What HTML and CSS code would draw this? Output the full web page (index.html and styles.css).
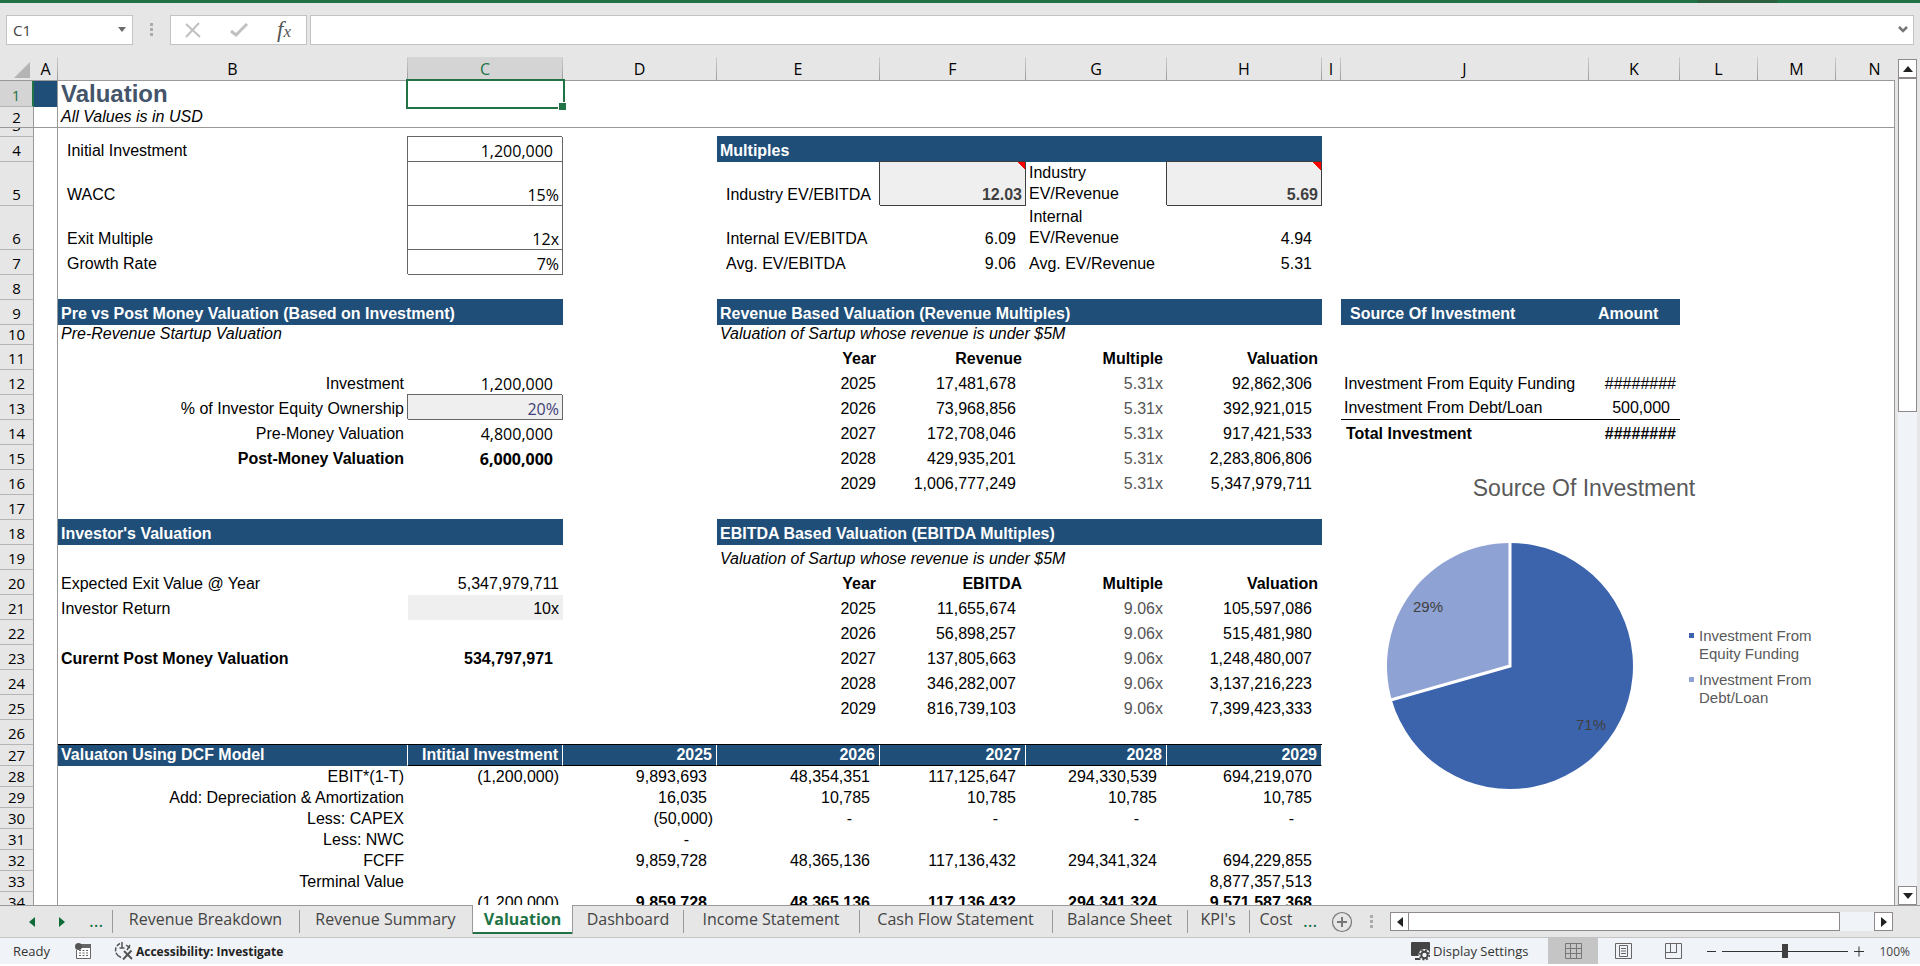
FILE: index.html
```html
<!DOCTYPE html>
<html lang="en">
<head>
<meta charset="utf-8">
<title>Valuation</title>
<link rel="stylesheet" href="styles.css">
</head>
<body>
<div class="app">
  <div class="titlebar"><span class="titlebar-mark"></span></div>

  <div class="formula-row">
    <div class="name-box">
      <input type="text" value="C1" aria-label="Name Box">
      <button type="button" aria-label="Open name list"><svg width="8" height="5" viewBox="0 0 8 5"><path d="M0 0h8L4 5z" fill="#6a6a6a"/></svg></button>
    </div>
    <svg class="grip" width="3" height="14" viewBox="0 0 3 14" fill="#ababab"><path d="M0 0h3v3H0zM0 5h3v3H0zM0 10h3v3H0z"/></svg>
    <div class="formula-tools">
      <button type="button" aria-label="Cancel"><svg width="16" height="16" viewBox="0 0 16 16" fill="none" stroke="#c0c0c0" stroke-width="2"><path d="M1 2l14 13M14 1L1 15"/></svg></button>
      <button type="button" aria-label="Enter"><svg width="18" height="16" viewBox="0 0 18 16" fill="none" stroke="#c0c0c0" stroke-width="3"><path d="M1 9l5 4L17 2"/></svg></button>
      <button type="button" class="fx" aria-label="Insert Function"><i>f</i><i class="fx-x">x</i></button>
    </div>
    <div class="formula-box">
      <input type="text" value="" aria-label="Formula Bar">
      <button type="button" aria-label="Expand Formula Bar"><svg width="10" height="7" viewBox="0 0 10 7" fill="none" stroke="#777" stroke-width="2.5"><path d="M1 1l4 4 4-4"/></svg></button>
    </div>
  </div>

  <div class="work">
    <div class="sheet">
      <table class="grid">
        <colgroup>
          <col class="c-num"><col class="c-a"><col class="c-b"><col class="c-c"><col class="c-d"><col class="c-e"><col class="c-f"><col class="c-g"><col class="c-h"><col class="c-i"><col class="c-j"><col class="c-k"><col class="c-l"><col class="c-m"><col>
        </colgroup>
        <thead>
          <tr><th class="corner"><svg width="16" height="16" viewBox="0 0 16 16"><path d="M16 0v16H0z" fill="#b4b4b4"/></svg></th><th>A</th><th>B</th><th class="on">C</th><th>D</th><th>E</th><th>F</th><th>G</th><th>H</th><th>I</th><th>J</th><th>K</th><th>L</th><th>M</th><th class="cut">N</th></tr>
        </thead>
        <tbody>
          <tr class="r26"><th class="on">1</th><td class="a navy"></td><td class="title">Valuation</td><td class="selected"><span class="cursor"></span></td></tr>
          <tr class="r21 frozen"><th>2</th><td class="a"></td><td class="it">All Values is in USD</td><td colspan="12"></td></tr>
          <tr class="r9"><th><div class="clip">3</div></th><td class="a"></td></tr>
          <tr class="r25"><th>4</th><td class="a"></td><td class="in">Initial Investment</td><td class="box acc alt">1,200,000</td><td></td><td class="head" colspan="4">Multiples</td></tr>
          <tr class="r44"><th>5</th><td class="a"></td><td class="in">WACC</td><td class="box r alt">15%</td><td></td><td class="in">Industry EV/EBITDA</td><td class="box dark note r b">12.03</td><td class="wrap">Industry EV/Revenue</td><td class="box dark note r b">5.69</td></tr>
          <tr class="r44"><th>6</th><td class="a"></td><td class="in">Exit Multiple</td><td class="box r alt">12x</td><td></td><td class="in">Internal EV/EBITDA</td><td class="acc">6.09</td><td class="wrap">Internal EV/Revenue</td><td class="acc">4.94</td></tr>
          <tr class="r25"><th>7</th><td class="a"></td><td class="in">Growth Rate</td><td class="box r alt">7%</td><td></td><td class="in">Avg. EV/EBITDA</td><td class="acc">9.06</td><td>Avg. EV/Revenue</td><td class="acc">5.31</td></tr>
          <tr class="r25"><th>8</th><td class="a"></td></tr>
          <tr class="r25"><th>9</th><td class="a"></td><td class="head" colspan="2">Pre vs Post Money Valuation (Based on Investment)</td><td></td><td class="head" colspan="4">Revenue Based Valuation (Revenue Multiples)</td><td></td><td class="head in">Source Of Investment</td><td class="head in">Amount</td></tr>
          <tr class="r20"><th>10</th><td class="a"></td><td class="it">Pre-Revenue Startup Valuation</td><td></td><td></td><td class="it" colspan="4">Valuation of Sartup whose revenue is under $5M</td></tr>
          <tr class="r25"><th>11</th><td class="a"></td><td></td><td></td><td></td><td class="r b">Year</td><td class="r b">Revenue</td><td class="r b">Multiple</td><td class="r b">Valuation</td></tr>
          <tr class="r25"><th>12</th><td class="a"></td><td class="r">Investment</td><td class="acc alt">1,200,000</td><td></td><td class="r">2025</td><td class="acc">17,481,678</td><td class="r grey">5.31x</td><td class="acc">92,862,306</td><td></td><td>Investment From Equity Funding</td><td class="r">########</td></tr>
          <tr class="r25"><th>13</th><td class="a"></td><td class="r">% of Investor Equity Ownership</td><td class="box fill r plum alt">20%</td><td></td><td class="r">2026</td><td class="acc">73,968,856</td><td class="r grey">5.31x</td><td class="acc">392,921,015</td><td></td><td class="under">Investment From Debt/Loan</td><td class="acc under">500,000</td></tr>
          <tr class="r25"><th>14</th><td class="a"></td><td class="r">Pre-Money Valuation</td><td class="acc alt">4,800,000</td><td></td><td class="r">2027</td><td class="acc">172,708,046</td><td class="r grey">5.31x</td><td class="acc">917,421,533</td><td></td><td class="b total">Total Investment</td><td class="r b">########</td></tr>
          <tr class="r25"><th>15</th><td class="a"></td><td class="r b">Post-Money Valuation</td><td class="acc b alt">6,000,000</td><td></td><td class="r">2028</td><td class="acc">429,935,201</td><td class="r grey">5.31x</td><td class="acc">2,283,806,806</td></tr>
          <tr class="r25"><th>16</th><td class="a"></td><td></td><td></td><td></td><td class="r">2029</td><td class="acc">1,006,777,249</td><td class="r grey">5.31x</td><td class="acc">5,347,979,711</td></tr>
          <tr class="r25"><th>17</th><td class="a"></td></tr>
          <tr class="r25"><th>18</th><td class="a"></td><td class="head" colspan="2">Investor's Valuation</td><td></td><td class="head" colspan="4">EBITDA Based Valuation (EBITDA Multiples)</td></tr>
          <tr class="r25"><th>19</th><td class="a"></td><td></td><td></td><td></td><td class="it" colspan="4">Valuation of Sartup whose revenue is under $5M</td></tr>
          <tr class="r25"><th>20</th><td class="a"></td><td>Expected Exit Value @ Year</td><td class="r">5,347,979,711</td><td></td><td class="r b">Year</td><td class="r b">EBITDA</td><td class="r b">Multiple</td><td class="r b">Valuation</td></tr>
          <tr class="r25"><th>21</th><td class="a"></td><td>Investor Return</td><td class="fill r">10x</td><td></td><td class="r">2025</td><td class="acc">11,655,674</td><td class="r grey">9.06x</td><td class="acc">105,597,086</td></tr>
          <tr class="r25"><th>22</th><td class="a"></td><td></td><td></td><td></td><td class="r">2026</td><td class="acc">56,898,257</td><td class="r grey">9.06x</td><td class="acc">515,481,980</td></tr>
          <tr class="r25"><th>23</th><td class="a"></td><td class="b">Curernt Post Money Valuation</td><td class="acc b">534,797,971</td><td></td><td class="r">2027</td><td class="acc">137,805,663</td><td class="r grey">9.06x</td><td class="acc">1,248,480,007</td></tr>
          <tr class="r25"><th>24</th><td class="a"></td><td></td><td></td><td></td><td class="r">2028</td><td class="acc">346,282,007</td><td class="r grey">9.06x</td><td class="acc">3,137,216,223</td></tr>
          <tr class="r25"><th>25</th><td class="a"></td><td></td><td></td><td></td><td class="r">2029</td><td class="acc">816,739,103</td><td class="r grey">9.06x</td><td class="acc">7,399,423,333</td></tr>
          <tr class="r25"><th>26</th><td class="a"></td></tr>
          <tr class="r21 years"><th>27</th><td class="a"></td><td class="head">Valuaton Using DCF Model</td><td class="head r">Intitial Investment</td><td class="head r">2025</td><td class="head r">2026</td><td class="head r">2027</td><td class="head r">2028</td><td class="head r">2029</td></tr>
          <tr class="r21"><th>28</th><td class="a"></td><td class="r">EBIT*(1-T)</td><td class="r">(1,200,000)</td><td class="acc">9,893,693</td><td class="acc">48,354,351</td><td class="acc">117,125,647</td><td class="acc">294,330,539</td><td class="acc">694,219,070</td></tr>
          <tr class="r21"><th>29</th><td class="a"></td><td class="r">Add: Depreciation &amp; Amortization</td><td></td><td class="acc">16,035</td><td class="acc">10,785</td><td class="acc">10,785</td><td class="acc">10,785</td><td class="acc">10,785</td></tr>
          <tr class="r21"><th>30</th><td class="a"></td><td class="r">Less: CAPEX</td><td></td><td class="r">(50,000)</td><td class="dash">-</td><td class="dash">-</td><td class="dash">-</td><td class="dash">-</td></tr>
          <tr class="r21"><th>31</th><td class="a"></td><td class="r">Less: NWC</td><td></td><td class="dash">-</td></tr>
          <tr class="r21"><th>32</th><td class="a"></td><td class="r">FCFF</td><td></td><td class="acc">9,859,728</td><td class="acc">48,365,136</td><td class="acc">117,136,432</td><td class="acc">294,341,324</td><td class="acc">694,229,855</td></tr>
          <tr class="r21"><th>33</th><td class="a"></td><td class="r">Terminal Value</td><td></td><td></td><td></td><td></td><td></td><td class="acc">8,877,357,513</td></tr>
          <tr class="r21"><th>34</th><td class="a"></td><td></td><td class="r">(1,200,000)</td><td class="acc b">9,859,728</td><td class="acc b">48,365,136</td><td class="acc b">117,136,432</td><td class="acc b">294,341,324</td><td class="acc b">9,571,587,368</td></tr>
        </tbody>
      </table>

      <figure class="chart">
        <figcaption>Source Of Investment</figcaption>
        <div class="chart-body">
          <svg class="pie" width="248" height="248" viewBox="-124 -124 248 248" role="img" aria-label="Equity funding 71%, debt or loan 29%">
            <path d="M0 0V-123A123 123 0 1 1 -118.3 33.7Z" fill="#3b64ad"/>
            <path d="M0 0L-118.3 33.7A123 123 0 0 1 0 -123Z" fill="#8fa2d4"/>
            <path d="M0 -124V0L-119.3 34" fill="none" stroke="#fff" stroke-width="3"/>
            <text x="-82" y="-54">29%</text>
            <text x="81" y="64">71%</text>
          </svg>
          <ul class="legend">
            <li>Investment From Equity Funding</li>
            <li class="light">Investment From Debt/Loan</li>
          </ul>
        </div>
      </figure>
    </div>

    <div class="vscroll">
      <button type="button" aria-label="Scroll up"><svg width="10" height="6" viewBox="0 0 10 6"><path d="M5 0l5 6H0z" fill="#222"/></svg></button>
      <div class="thumb"></div>
      <div class="track"></div>
      <button type="button" aria-label="Scroll down"><svg width="10" height="6" viewBox="0 0 10 6"><path d="M0 0h10L5 6z" fill="#222"/></svg></button>
    </div>
  </div>

  <div class="tabbar">
    <div class="tab-nav">
      <button type="button" aria-label="Previous sheet"><svg width="6" height="10" viewBox="0 0 6 10"><path d="M6 0v10L0 5z" fill="#0e6b38"/></svg></button>
      <button type="button" aria-label="Next sheet"><svg width="6" height="10" viewBox="0 0 6 10"><path d="M0 0v10l6-5z" fill="#0e6b38"/></svg></button>
      <button type="button" class="more">...</button>
    </div>
    <nav class="tabs" aria-label="Sheets">
      <button type="button" class="w-break">Revenue Breakdown</button>
      <button type="button" class="w-sum">Revenue Summary</button>
      <button type="button" class="w-val active">Valuation</button>
      <button type="button" class="w-dash">Dashboard</button>
      <button type="button" class="w-inc">Income Statement</button>
      <button type="button" class="w-cash">Cash Flow Statement</button>
      <button type="button" class="w-bal">Balance Sheet</button>
      <button type="button" class="w-kpi">KPI's</button>
      <button type="button" class="w-cost">Cost</button>
    </nav>
    <button type="button" class="more">...</button>
    <button type="button" class="add" aria-label="New sheet"><svg width="22" height="22" viewBox="0 0 22 22" fill="none" stroke="#777"><circle cx="11" cy="11" r="9.5" stroke-width="1.2"/><path d="M11 6v10M6 11h10" stroke-width="2"/></svg></button>
    <svg class="grip" width="3" height="14" viewBox="0 0 3 14" fill="#ababab"><path d="M0 0h3v3H0zM0 5h3v3H0zM0 10h3v3H0z"/></svg>
    <div class="hscroll">
      <button type="button" aria-label="Scroll left"><svg width="6" height="10" viewBox="0 0 6 10"><path d="M6 0v10L0 5z" fill="#222"/></svg></button>
      <div class="thumb"></div>
      <div class="track"></div>
      <button type="button" aria-label="Scroll right"><svg width="6" height="10" viewBox="0 0 6 10"><path d="M0 0v10l6-5z" fill="#222"/></svg></button>
    </div>
  </div>

  <footer class="status">
    <span class="ready">Ready</span>
    <button type="button" class="macro" aria-label="Record macro"><svg width="16" height="16" viewBox="0 0 16 16"><path d="M4.500 1.500H15.500V15.500H1.500V7" fill="#fff" stroke="#666"/><path d="M5 1h11v4H5z" fill="#666"/><circle cx="3.500" cy="3.500" r="3.500" fill="#555"/><path d="M4 7.500h10M4 10h10M4 12.500h10" stroke="#666" stroke-dasharray="2 1.500"/></svg></button>
    <button type="button" class="access"><svg width="19" height="18" viewBox="0 0 19 18" fill="none" stroke="#555" stroke-width="1.500"><path d="M6 1.500A7.500 7.500 0 0 0 2 11" stroke-dasharray="4 1.500"/><path d="M2 11c1 2 2.500 3.500 5 4.500"/><path d="M8 0v6M5.500 6h5M12 3l4 3M16 3l-3 5"/><path d="M10 9l8 8M17.500 8.500L9 17.500" stroke-width="2"/></svg>Accessibility: Investigate</button>
    <span class="spacer"></span>
    <button type="button" class="display"><svg width="20" height="19" viewBox="0 0 20 19"><path d="M1 0h17a1 1 0 0 1 1 1v13H1a1 1 0 0 1-1-1V1a1 1 0 0 1 1-1z" fill="#444"/><path d="M4 17h6" stroke="#444" stroke-width="2"/><circle cx="13.500" cy="13" r="6" fill="#f0f3f8"/><circle cx="13.500" cy="13" r="3.200" fill="none" stroke="#444" stroke-width="2"/><circle cx="13.500" cy="13" r="4.800" fill="none" stroke="#444" stroke-width="1.600" stroke-dasharray="1.900 1.870"/></svg>Display Settings</button>
    <div class="views">
      <button type="button" class="view on" aria-label="Normal"><svg width="17" height="16" viewBox="0 0 17 16" fill="none" stroke="#777"><path d="M.5 .5h16v15H.5zM.5 5.500h16M.5 10.500h16M5.500 .5v15M11.500 .5v15"/></svg></button>
      <button type="button" class="view" aria-label="Page Layout"><svg width="17" height="16" viewBox="0 0 17 16" fill="none" stroke="#666"><path d="M.5 .5h16v15H.5zM4.500 2.500h8v11h-8zM6 5.500h5M6 8h5M6 10.500h5"/></svg></button>
      <button type="button" class="view" aria-label="Page Break Preview"><svg width="17" height="16" viewBox="0 0 17 16" fill="none" stroke="#666"><path d="M.5 .5h16v15H.5zM5.500 .5v9M11.500 .5v9.500M.5 9.500h11"/></svg></button>
    </div>
    <div class="zoom">
      <button type="button" aria-label="Zoom out"><svg width="9" height="11" viewBox="0 0 9 11"><path d="M0 5.500h9" stroke="#333"/></svg></button>
      <input type="range" min="0" max="100" value="50" aria-label="Zoom">
      <button type="button" aria-label="Zoom in"><svg width="10" height="11" viewBox="0 0 10 11"><path d="M0 5.500h10M5 .5v10" stroke="#333"/></svg></button>
    </div>
    <button type="button" class="percent">100%</button>
  </footer>
</div>
</body>
</html>
```
FILE: styles.css
```css
* { box-sizing: border-box; }

:root {
  --chrome: #e6e6e6;
  --line: #999;
  --navy: #1f4e79;
  --green: #217346;
  --pale: #f0f3f8;
  --ui: "Open Sans", "Noto Sans", sans-serif;
}

body {
  margin: 0;
  background: #fff;
  font-family: "Liberation Sans", Arial, sans-serif;
  font-size: 16px;
  color: #000;
}

button {
  display: flex;
  align-items: center;
  justify-content: center;
  margin: 0;
  padding: 0;
  border: 0;
  background: none;
  color: inherit;
  font: inherit;
}

svg { display: block; flex: none; }

.app {
  display: flex;
  flex-direction: column;
  height: 100vh;
  padding-bottom: 2px;
  overflow: hidden;
}

/* Title strip and formula bar */
.titlebar { flex: none; height: 3px; padding-right: 143px; background: var(--green); }
.titlebar-mark { display: block; width: 80px; height: 3px; margin-left: auto; background: #2a6040; }

.formula-row {
  display: flex;
  flex: none;
  align-items: center;
  height: 54px;
  padding: 0 6px 1px;
  background: var(--chrome);
  font-family: var(--ui);
}
.name-box, .formula-tools, .formula-box {
  display: flex;
  align-items: center;
  height: 30px;
  border: 1px solid #c3c3c3;
  background: #fff;
}
.name-box { width: 127px; }
.name-box button { width: 20px; height: 100%; }
.formula-row input {
  flex: 1;
  min-width: 0;
  height: 100%;
  padding: 0 6px;
  border: 0;
  outline: 0;
  background: none;
  font: 15px var(--ui);
  color: #444;
}
.grip { margin: 0 17px; }
.formula-tools { justify-content: space-between; width: 137px; padding: 0 15px 0 14px; }
.fx { font: 23px "Liberation Serif", serif; color: #555; }
.fx i { line-height: 24px; }
.fx-x { padding-top: 5px; font-size: 17px; }
.formula-box { flex: 1; margin-left: 3px; }
.formula-box button { width: 20px; height: 100%; }

/* Sheet */
.work { display: flex; flex: 1; min-height: 0; background: var(--chrome); }
.sheet {
  position: relative;
  flex: 1;
  min-width: 0;
  overflow: hidden;
  background: #fff;
}
.sheet::after {
  content: "";
  position: absolute;
  inset: 23px 0 0 auto;
  border-right: 1px solid var(--line);
}
.grid {
  width: 100%;
  table-layout: fixed;
  border-collapse: separate;
  border-spacing: 0;
}
.c-num { width: 34px; }
.c-a { width: 24px; }
.c-b { width: 350px; }
.c-c { width: 155px; }
.c-d { width: 154px; }
.c-e { width: 163px; }
.c-f { width: 146px; }
.c-g { width: 141px; }
.c-h { width: 155px; }
.c-i { width: 19px; }
.c-j { width: 248px; }
.c-k { width: 91px; }
.c-l { width: 78px; }
.c-m { width: 78px; }

.grid th {
  padding: 0;
  background: var(--chrome);
  font: 15px/18px var(--ui);
  vertical-align: bottom;
}
.grid thead th {
  height: 24px;
  padding-bottom: 2px;
  border-bottom: 1px solid var(--line);
  border-right: 1px solid;
  border-image: linear-gradient(#d0d0d0, #999) 1;
  border-left: 0;
  border-top: 0;
  font-size: 16px;
}
.grid thead .corner { border-image: none; border-right: 0; }
.corner svg { margin-left: 14px; }
.grid thead .cut { padding-left: 18px; border-right: 0; border-image: none; }
.grid tbody th {
  padding-bottom: 2px;
  border-right: 1px solid var(--line);
  border-bottom: 1px solid #b5b5b5;
}
.grid thead .on { background: #d4d4d4; color: var(--green); }
.grid tbody .on { border-right: 2px solid var(--green); background: #d4d4d4; color: var(--green); }
.clip { display: flex; align-items: flex-end; justify-content: center; height: 6px; overflow: hidden; }

.grid td {
  padding: 0 2px 2px 3px;
  line-height: 18px;
  vertical-align: bottom;
  white-space: nowrap;
}
.r9 { height: 9px; }
.r20 { height: 20px; }
.r21 { height: 21px; }
.r25 { height: 25px; }
.r26 { height: 26px; }
.r44 { height: 44px; }
.grid .r21 td, .grid .r21 th, .grid .r20 th { padding-bottom: 1px; }
.grid .frozen th, .grid .frozen td { border-bottom: 1px solid var(--line); }

.grid .a { border-right: 1px solid var(--line); }
.grid .navy { background: var(--navy); }
.grid .title { padding-bottom: 0; font-size: 24px; font-weight: bold; line-height: 26px; color: #44546a; }
.grid .r { padding-right: 4px; text-align: right; }
.grid .acc { padding-right: 10px; text-align: right; }
.grid .dash { padding-right: 28px; text-align: right; }
.grid .in { padding-left: 9px; }
.grid .total { padding-left: 5px; }
.grid .wrap { line-height: 21px; white-space: normal; }
.it { font-style: italic; }
.b { font-weight: bold; }
.alt { font-family: var(--ui); }
.grey { color: #555; }
.plum { color: #3f3f76; }
.fill { background: #efefef; }
.head { background: var(--navy); box-shadow: 0 -1px var(--navy); color: #fff; font-weight: bold; }
.under { border-bottom: 1px solid #000; }
.box {
  border-right: 1px solid #666;
  border-bottom: 1px solid #666;
  box-shadow: -1px -1px #666;
}
.grid .box { padding-right: 3px; padding-bottom: 1px; }
.grid .box.acc { padding-right: 9px; }
.dark { border-color: #3f3f3f; background: #efefef; box-shadow: -1px -1px #3f3f3f; color: #3f3f3f; }
.note { background: linear-gradient(to bottom left, red 50%, transparent 50%) top right / 8px 8px no-repeat #efefef; }
.years .head { border-right: 1px solid #fff; border-bottom: 1px solid #000; box-shadow: 0 -1px #000; }
.years .head:nth-child(3) { border-bottom-color: var(--navy); }

.selected { position: relative; }
.cursor { position: absolute; inset: -2px; z-index: 2; border: 2px solid var(--green); }
.cursor::after {
  content: "";
  position: absolute;
  right: -3px;
  bottom: -3px;
  width: 7px;
  height: 7px;
  border: solid #fff;
  border-width: 1px 0 0 1px;
  background: var(--green);
}

/* Chart floats above the cells */
.chart { position: absolute; top: 416px; left: 1386px; width: 470px; margin: 0; color: #595959; }
.chart figcaption { padding-right: 74px; font-size: 23px; line-height: 30px; text-align: center; }
.chart-body { display: flex; align-items: center; gap: 55px; padding-top: 39px; }
.pie text { font-size: 15px; text-anchor: middle; fill: #404040; }
.legend {
  display: flex;
  flex-direction: column;
  gap: 8px;
  width: 130px;
  margin: 0;
  padding: 2px 0 0;
  list-style: none;
  font-size: 15px;
  line-height: 18px;
}
.legend li { position: relative; padding-left: 10px; }
.legend li::before { content: ""; position: absolute; top: 6px; left: 0; width: 5px; height: 5px; background: #3b64ad; }
.legend .light::before { background: #8fa2d4; }

/* Scroll bars */
.vscroll { display: flex; flex: none; flex-direction: column; width: 25px; padding: 2px 3px 0; }
.vscroll button, .hscroll button { flex: none; width: 19px; height: 19px; border: 1px solid #8f888c; background: #fff; }
.thumb { border: 1px solid #8f888c; background: #fff; }
.track { background: var(--pale); }
.vscroll .thumb { flex: 333; }
.vscroll .track { flex: 475; }

/* Sheet tabs */
.tabbar {
  display: flex;
  flex: none;
  height: 33px;
  padding-right: 27px;
  border-top: 1px solid var(--line);
  border-bottom: 1px solid #c3c3c3;
  background: var(--chrome);
  font: 16px var(--ui);
  color: #444;
}
.tab-nav { display: flex; flex: none; gap: 24px; width: 112px; padding-left: 29px; }
.more { align-items: flex-start; color: #0e6b38; font-size: 18px; line-height: 28px; }
.tabs { display: flex; flex: none; }
.tabs button { position: relative; height: 28px; padding-bottom: 2px; }
.tabs button::before { content: ""; position: absolute; top: 4px; bottom: 1px; left: 0; border-left: 1px solid var(--line); }
.tabs .active::before, .active + button::before { display: none; }
.tabs .active {
  margin-top: -1px;
  height: 29px;
  border: solid var(--line);
  border-width: 0 1px;
  background: #fff;
  box-shadow: inset 0 -2px var(--green);
  color: var(--green);
  font-weight: bold;
}
.w-break { width: 187px; }
.w-sum { width: 173px; }
.w-val { width: 101px; }
.w-dash { width: 110px; }
.w-inc { width: 176px; }
.w-cash { width: 193px; }
.w-bal { width: 135px; }
.w-kpi { width: 62px; }
.w-cost { width: 54px; }
.tabbar > .more { padding-right: 14px; }
.tabbar > .grip { align-self: center; }
.hscroll { display: flex; flex: 1; align-items: center; }
.hscroll .thumb { flex: 429; height: 19px; margin-left: -1px; }
.hscroll .track { flex: 34; height: 19px; }

/* Status bar */
.status {
  display: flex;
  flex: none;
  align-items: center;
  height: 26px;
  padding: 0 10px 0 13px;
  background: var(--pale);
  font: 13px var(--ui);
  color: #333;
}
.ready { width: 62px; }
.macro { margin-right: 23px; }
.access { gap: 3px; color: #222; font-size: 12px; font-weight: bold; }
.display { gap: 2px; margin-right: 20px; }
.spacer { flex: 1; }
.views { display: flex; }
.view { width: 50px; height: 26px; }
.view.on { background: #c5c5c5; }
.zoom { display: flex; align-items: center; gap: 6px; margin: 0 15px 0 9px; }
.zoom input { width: 126px; height: 14px; margin: 0; background: none; appearance: none; }
.zoom input::-webkit-slider-runnable-track { height: 14px; background: linear-gradient(#333, #333) center / 100% 1px no-repeat; }
.zoom input::-webkit-slider-thumb { width: 6px; height: 14px; background: #404040; appearance: none; }
.percent { color: #444; font-size: 12px; }
```
